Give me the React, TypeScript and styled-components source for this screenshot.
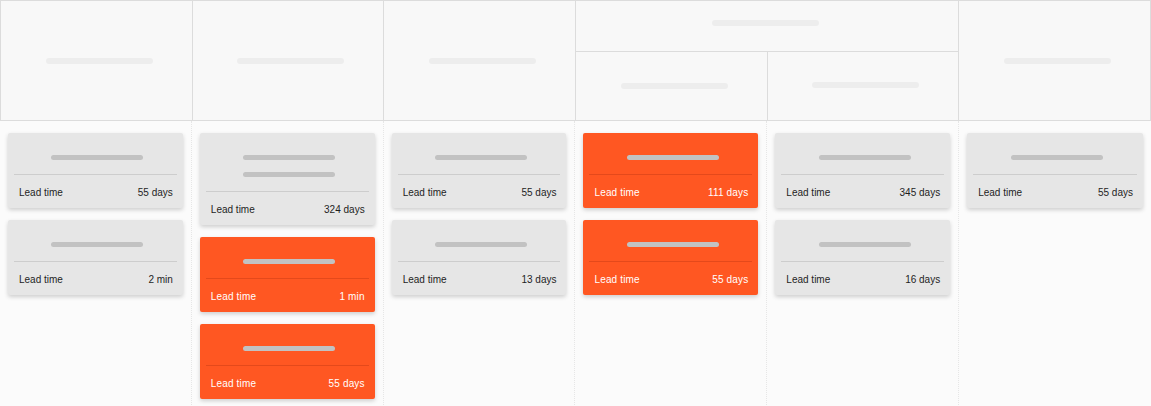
import React from "react";
import styled, { createGlobalStyle } from "styled-components";

const Global = createGlobalStyle`
  html, body { margin: 0; padding: 0; background: #fbfbfb; }
  body { font-family: "Liberation Sans", Arial, sans-serif; }
  * { box-sizing: border-box; }
`;

const Board = styled.div`
  width: 1151px;
  height: 406px;
  display: flex;
  flex-direction: column;
  background: #fbfbfb;
  overflow: hidden;
`;

const Header = styled.div`
  display: grid;
  grid-template-columns: repeat(6, 1fr);
  grid-template-rows: 51px 69px;
  border-top: 1px solid #dcdcdc;
  border-left: 1px solid #dcdcdc;
  background: #f8f8f8;
`;

const HeadCell = styled.div<{ $col: string; $row: string; $lift?: number }>`
  grid-column: ${(p) => p.$col};
  grid-row: ${(p) => p.$row};
  border-right: 1px solid #dcdcdc;
  border-bottom: 1px solid #dcdcdc;
  display: flex;
  align-items: center;
  justify-content: center;
  padding-bottom: ${(p) => p.$lift ?? 0}px;
`;

const HeadBar = styled.div<{ $shift?: number }>`
  width: 107px;
  height: 6px;
  border-radius: 3px;
  background: #ededed;
  margin-left: ${(p) => p.$shift ?? 6}px;
`;

const Body = styled.div`
  flex: 1;
  display: grid;
  grid-template-columns: repeat(6, 1fr);
`;

const Column = styled.div`
  display: flex;
  flex-direction: column;
  gap: 12px;
  padding: 12px 8px;
  border-right: 1px dotted #e6e6e6;
  &:last-child { border-right: none; }
`;

const Card = styled.div<{ $hot?: boolean }>`
  border-radius: 2px;
  background: ${(p) => (p.$hot ? "#ff5722" : "#e6e6e6")};
  color: ${(p) => (p.$hot ? "#ffffff" : "#1e1e1e")};
  box-shadow: 0 2px 4px rgba(0, 0, 0, 0.18);
  padding: 0 6px;
`;

const Title = styled.div`
  display: flex;
  flex-direction: column;
  align-items: center;
  gap: 12px;
  padding: 22px 0 14px;
`;

const Line = styled.div`
  width: 92px;
  height: 5px;
  background: #c2c2c2;
  border-radius: 2.5px;
  margin-left: 4px;
`;

const Footer = styled.div<{ $hot?: boolean }>`
  display: flex;
  justify-content: space-between;
  align-items: center;
  height: 34px;
  padding: 2px 4px 0 5px;
  border-top: 1px solid ${(p) => (p.$hot ? "#e4491b" : "#cdcdcd")};
  font-size: 10px;
  letter-spacing: ${(p) => (p.$hot ? "0.15px" : "0")};
`;

type CardData = { value: string; hot?: boolean; lines?: number };

const columns: CardData[][] = [
  [{ value: "55 days" }, { value: "2 min" }],
  [
    { value: "324 days", lines: 2 },
    { value: "1 min", hot: true },
    { value: "55 days", hot: true },
  ],
  [{ value: "55 days" }, { value: "13 days" }],
  [
    { value: "111 days", hot: true },
    { value: "55 days", hot: true },
  ],
  [{ value: "345 days" }, { value: "16 days" }],
  [{ value: "55 days" }],
];

export default function App() {
  return (
    <Board>
      <Global />
      <Header>
        <HeadCell $col="1" $row="1 / span 2"><HeadBar /></HeadCell>
        <HeadCell $col="2" $row="1 / span 2"><HeadBar /></HeadCell>
        <HeadCell $col="3" $row="1 / span 2"><HeadBar /></HeadCell>
        <HeadCell $col="4 / span 2" $row="1" $lift={6}><HeadBar $shift={-4} /></HeadCell>
        <HeadCell $col="4" $row="2"><HeadBar /></HeadCell>
        <HeadCell $col="5" $row="2" $lift={2}><HeadBar /></HeadCell>
        <HeadCell $col="6" $row="1 / span 2"><HeadBar /></HeadCell>
      </Header>
      <Body>
        {columns.map((cards, i) => (
          <Column key={i}>
            {cards.map((c, j) => (
              <Card key={j} $hot={c.hot}>
                <Title>
                  {Array.from({ length: c.lines ?? 1 }).map((_, k) => (
                    <Line key={k} />
                  ))}
                </Title>
                <Footer $hot={c.hot}>
                  <span>Lead time</span>
                  <span>{c.value}</span>
                </Footer>
              </Card>
            ))}
          </Column>
        ))}
      </Body>
    </Board>
  );
}
